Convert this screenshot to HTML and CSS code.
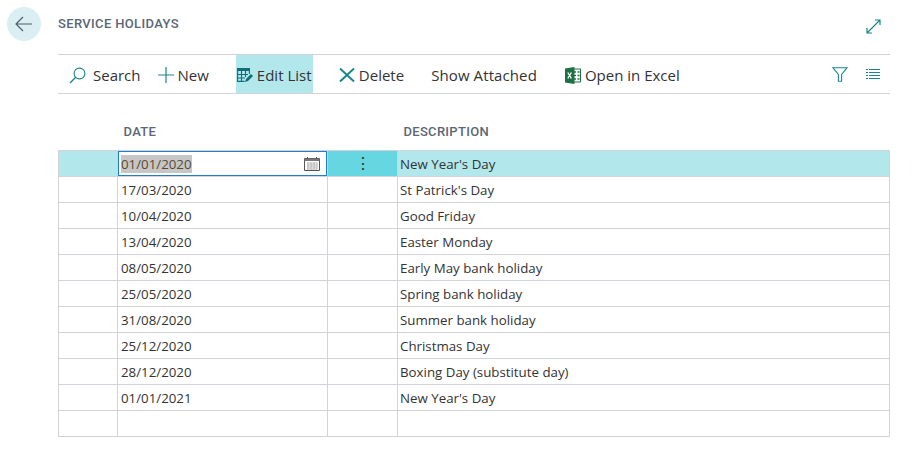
FILE: index.html
```html
<!DOCTYPE html>
<html lang="en">
<head>
    <meta charset="UTF-8">
    <title>Service Holidays</title>
    <link rel="stylesheet" href="styles.css">
</head>
<body>
    <div class="page">
        <div class="back-col">
            <button class="back" type="button">
                <svg width="20" height="16" viewBox="0 0 20 16"><path d="M9 1 2 8l7 7M2 8h16" fill="none" stroke="#505c6d" stroke-width="1.2"/></svg>
            </button>
        </div>
        <div class="main">
            <div class="title-row">
                <h2>SERVICE HOLIDAYS</h2>
                <svg class="expand" width="15" height="15" viewBox="0 0 15 15"><path d="M1 14 14 1M9 1H14V6M1 9V14H6" fill="none" stroke="#17878f" stroke-width="1.2"/></svg>
            </div>
            <div class="toolbar">
                <button class="tool tool-search" type="button">
                    <svg width="17" height="17" viewBox="0 0 17 17"><circle cx="10.5" cy="6.5" r="5.4" fill="none" stroke="#17878f" stroke-width="1.1"/><path d="M6.7 10.3 1 16" fill="none" stroke="#17878f" stroke-width="1.3"/></svg>
                    Search
                </button>
                <button class="tool tool-new" type="button">
                    <svg width="16" height="16" viewBox="0 0 16 16"><path d="M8 0v16M0 8h16" fill="none" stroke="#17878f" stroke-width="1.2"/></svg>
                    New
                </button>
                <button class="tool tool-edit" type="button">
                    <svg width="16" height="15" viewBox="0 0 16 15"><path d="M0 0h13v3H0z" fill="#0f6f78"/><path d="M.6 3v10.4h7M12.4 3v3M4.5 3v10M8.5 3v6M1 6.5h10M1 10h7" fill="none" stroke="#0f6f78" stroke-width="1.1"/><path d="M8 14l1-3 5-5 2 2-5 5z" fill="#0f6f78"/></svg>
                    Edit List
                </button>
                <button class="tool tool-delete" type="button">
                    <svg width="16" height="14" viewBox="0 0 16 14"><path d="M1 0.5 15 13.5M15 0.5 1 13.5" fill="none" stroke="#17878f" stroke-width="2"/></svg>
                    Delete
                </button>
                <button class="tool tool-attached" type="button">Show Attached</button>
                <button class="tool tool-excel" type="button">
                    <svg width="16" height="17" viewBox="0 0 16 17"><path d="M8 2h7.5v13H8z" fill="#fff" stroke="#1e7145"/><path d="M9 5h2M12.5 5h2M9 8.5h2M12.5 8.5h2M9 12h2M12.5 12h2" stroke="#1e7145" stroke-width="1.5"/><path d="M0 1.5 9.5 0v17L0 15.5z" fill="#1e7145"/><path d="M2.8 5.5 6.4 11.5M6.4 5.5 2.8 11.5" stroke="#fff" stroke-width="1.3"/></svg>
                    Open in Excel
                </button>
                <div class="tool-right">
                    <svg width="16" height="15" viewBox="0 0 16 15"><path d="M.8.7h14.4L9.6 7.4v6.8H6.4V7.4z" fill="none" stroke="#17878f" stroke-width="1.1"/></svg>
                    <svg width="14" height="10" viewBox="0 0 14 10"><path d="M0 .5h2M3 .5h11M0 3.5h2M3 3.5h11M0 6.5h2M3 6.5h11M0 9.5h2M3 9.5h11" stroke="#17878f"/></svg>
                </div>
            </div>
            <table class="grid">
                <colgroup>
                    <col class="col-mark">
                    <col class="col-date">
                    <col class="col-menu">
                    <col>
                </colgroup>
                <thead>
                    <tr>
                        <th></th>
                        <th class="th-date">DATE</th>
                        <th></th>
                        <th class="th-desc">DESCRIPTION</th>
                    </tr>
                </thead>
                <tbody>
                    <tr class="current">
                        <td></td>
                        <td class="date-cell">
                            <div class="date-input">
                                <span class="selected">01/01/2020</span>
                                <svg width="16" height="15" viewBox="0 0 16 15"><path d="M.5 2.5h15v12H.5z" fill="#fff" stroke="#555"/><path d="M.5 2.5h15v2.5H.5z" fill="#777"/><path d="M3.5 1v2M12.5 1v2" stroke="#555"/><path d="M3 7h10M3 9h10M3 11h10M3 13h10M4 6.5v7M7 6.5v7M10 6.5v7M13 6.5v7" stroke="#aaa" stroke-width=".8"/></svg>
                            </div>
                        </td>
                        <td class="menu-cell">⋮</td>
                        <td>New Year's Day</td>
                    </tr>
                    <tr><td></td><td>17/03/2020</td><td></td><td>St Patrick's Day</td></tr>
                    <tr><td></td><td>10/04/2020</td><td></td><td>Good Friday</td></tr>
                    <tr><td></td><td>13/04/2020</td><td></td><td>Easter Monday</td></tr>
                    <tr><td></td><td>08/05/2020</td><td></td><td>Early May bank holiday</td></tr>
                    <tr><td></td><td>25/05/2020</td><td></td><td>Spring bank holiday</td></tr>
                    <tr><td></td><td>31/08/2020</td><td></td><td>Summer bank holiday</td></tr>
                    <tr><td></td><td>25/12/2020</td><td></td><td>Christmas Day</td></tr>
                    <tr><td></td><td>28/12/2020</td><td></td><td>Boxing Day (substitute day)</td></tr>
                    <tr><td></td><td>01/01/2021</td><td></td><td>New Year's Day</td></tr>
                    <tr><td></td><td></td><td></td><td></td></tr>
                </tbody>
            </table>
        </div>
    </div>
</body>
</html>
```

FILE: styles.css
```css
body {
    margin: 0;
    background-color: #fff;
    color: #333;
    font-family: "Open Sans", "Noto Sans", sans-serif;
    font-size: 14px;
}
.page {
    display: flex;
    height: 470px;
    overflow: hidden;
}
.back-col {
    width: 58px;
    flex-shrink: 0;
    padding: 7px 0 0 7px;
    box-sizing: border-box;
}
.back {
    display: flex;
    align-items: center;
    justify-content: center;
    width: 34px;
    height: 34px;
    padding: 0;
    border: none;
    border-radius: 50%;
    background-color: #d9eff1;
}
.main {
    width: 832px;
}
.title-row {
    display: flex;
    align-items: center;
    justify-content: space-between;
    height: 54px;
    padding: 0 9px 0 0;
    box-sizing: border-box;
}
.title-row h2 {
    margin: 0 0 8px 0;
    color: #5c6675;
    font-family: Roboto, sans-serif;
    font-size: 13px;
    font-weight: 500;
    letter-spacing: 0.35px;
}
.expand {
    margin-bottom: 1px;
}
.toolbar {
    display: flex;
    align-items: stretch;
    height: 38px;
    border-top: 1px solid #d2d2d8;
    border-bottom: 1px solid #d2d2d8;
    margin-bottom: 19px;
}
.tool {
    display: flex;
    align-items: center;
    gap: 4px;
    padding: 2px 0 0 0;
    border: none;
    background: none;
    color: #333;
    font-family: inherit;
    font-size: 15px;
    white-space: nowrap;
}
.tool-search {
    margin-left: 11px;
    gap: 7px;
}
.tool-new {
    margin-left: 17px;
}
.tool-edit {
    margin-left: 27px;
    width: 77px;
    padding-left: 1px;
    gap: 4px;
    background-color: #b2e8ec;
    box-sizing: border-box;
}
.tool-delete {
    margin-left: 26px;
}
.tool-attached {
    margin-left: 27px;
    letter-spacing: 0.1px;
}
.tool-excel {
    margin-left: 28px;
}
.tool-right {
    display: flex;
    align-items: center;
    gap: 17px;
    margin-left: auto;
    padding: 0 10px 0 0;
}
.tool-right svg:first-child {
    margin-right: 1px;
}
.grid {
    width: 832px;
    table-layout: fixed;
    border-collapse: collapse;
}
.col-mark {
    width: 59px;
}
.col-date {
    width: 210px;
}
.col-menu {
    width: 70px;
}
.grid th {
    height: 37px;
    padding: 12px 0 0 6px;
    border: none;
    color: #5c6675;
    font-family: Roboto, sans-serif;
    font-size: 13px;
    font-weight: 500;
    letter-spacing: 0.3px;
    text-align: left;
    vertical-align: top;
    line-height: 14px;
    box-sizing: border-box;
}
.grid td {
    height: 26px;
    padding: 1px 0 0 3px;
    border: 1px solid #d2d2d8;
    box-sizing: border-box;
    font-size: 13.3px;
    line-height: 18px;
    white-space: nowrap;
}
.grid td:last-child {
    padding-left: 2px;
}
.current td {
    background-color: #b2e8ec;
}
.current td.date-cell {
    padding: 0;
    background-color: #fff;
}
.date-input {
    display: flex;
    align-items: center;
    justify-content: space-between;
    height: 25px;
    padding: 1px 6px 0 2px;
    border: 1px solid #1e7fd0;
    box-sizing: border-box;
}
.date-input svg {
    margin-top: -1px;
}
.selected {
    background-color: #c6c6c6;
    color: #5a4a32;
}
.current td.menu-cell {
    padding: 0;
    background-color: #66d6e0;
    color: #333;
    font-size: 16px;
    text-align: center;
}
```
